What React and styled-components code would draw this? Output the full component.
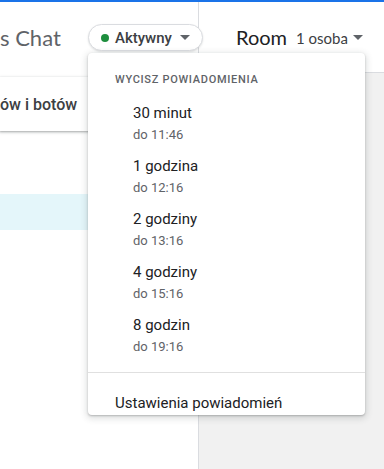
import React from "react";
import styled, { createGlobalStyle } from "styled-components";

const GlobalStyle = createGlobalStyle`
  html, body {
    margin: 0;
    padding: 0;
    background: #fff;
  }
  body {
    font-family: Roboto, "Liberation Sans", sans-serif;
  }
  * {
    box-sizing: border-box;
  }
`;

const muteOptions = [
  { label: "30 minut", until: "do 11:46" },
  { label: "1 godzina", until: "do 12:16" },
  { label: "2 godziny", until: "do 13:16" },
  { label: "4 godziny", until: "do 15:16" },
  { label: "8 godzin", until: "do 19:16" },
];

function Caret({ color = "#5f6368" }) {
  return (
    <svg width="10" height="5" viewBox="0 0 10 5">
      <path d="M0 0 L10 0 L5 5 Z" fill={color} />
    </svg>
  );
}

function MuteMenu() {
  return (
    <Menu>
      <MenuHeading>Wycisz powiadomienia</MenuHeading>
      <MenuList>
        {muteOptions.map((opt) => (
          <MenuItem key={opt.label}>
            <ItemLabel>{opt.label}</ItemLabel>
            <ItemSub>{opt.until}</ItemSub>
          </MenuItem>
        ))}
      </MenuList>
      <MenuDivider />
      <SettingsItem>Ustawienia powiadomień</SettingsItem>
    </Menu>
  );
}

export default function App() {
  return (
    <>
      <GlobalStyle />
      <Page>
        <LeftPane>
          <LeftHeader>
            <Title>s Chat</Title>
            <StatusAnchor>
              <StatusPill>
                <Dot />
                <StatusText>Aktywny</StatusText>
                <Caret />
              </StatusPill>
              <MuteMenu />
            </StatusAnchor>
          </LeftHeader>
          <SearchCard>
            <SearchText>ów i botów</SearchText>
          </SearchCard>
          <ChatList>
            <ChatRow />
            <ChatRow selected />
            <ChatRow />
          </ChatList>
        </LeftPane>
        <RightPane>
          <RoomHeader>
            <RoomName>Room</RoomName>
            <Members>
              1 osoba
              <Caret />
            </Members>
          </RoomHeader>
          <RoomBody />
        </RightPane>
      </Page>
    </>
  );
}

const Page = styled.div`
  width: 384px;
  height: 469px;
  overflow: hidden;
  border-top: 2px solid #1a73e8;
  display: grid;
  grid-template-columns: 199px 1fr;
`;

const LeftPane = styled.div`
  background: #fff;
  border-right: 1px solid #dadce0;
  display: flex;
  flex-direction: column;
  min-width: 0;
`;

const LeftHeader = styled.div`
  height: 71px;
  display: flex;
  align-items: center;
  gap: 27px;
  position: relative;
  z-index: 5;
`;

const Title = styled.div`
  font-family: Lato, "Open Sans", sans-serif;
  font-size: 22px;
  color: #5f6368;
  white-space: nowrap;
  flex-shrink: 0;
  width: 61px;
`;

const StatusAnchor = styled.div`
  position: relative;
  flex-shrink: 0;
`;

const StatusPill = styled.div`
  height: 27px;
  display: inline-flex;
  align-items: center;
  gap: 6px;
  padding: 0 12px 0 12px;
  border: 1px solid #dadce0;
  border-radius: 14px;
  background: #fff;
  box-shadow: 0 1px 2px rgba(60, 64, 67, 0.15);
  svg {
    margin-left: 2px;
  }
`;

const Dot = styled.span`
  width: 8px;
  height: 8px;
  border-radius: 50%;
  background: #1e8e3e;
`;

const StatusText = styled.span`
  font-size: 15px;
  font-weight: 500;
  color: #3c4043;
`;

const Menu = styled.div`
  position: absolute;
  top: calc(100% + 2px);
  left: 0;
  width: 277px;
  height: 362px;
  overflow: hidden;
  background: #fff;
  border-radius: 4px;
  box-shadow: 0 1px 2px 0 rgba(60, 64, 67, 0.3),
    0 2px 6px 2px rgba(60, 64, 67, 0.15);
`;

const MenuHeading = styled.div`
  padding: 19px 24px 8px 27px;
  font-size: 11px;
  line-height: 16px;
  font-weight: 500;
  letter-spacing: 0.7px;
  text-transform: uppercase;
  color: #5f6368;
`;

const MenuList = styled.div`
  display: flex;
  flex-direction: column;
`;

const MenuItem = styled.div`
  padding: 6px 16px 5px 45px;
  display: flex;
  flex-direction: column;
`;

const ItemLabel = styled.div`
  font-size: 15px;
  line-height: 22px;
  color: #202124;
`;

const ItemSub = styled.div`
  margin-top: 2px;
  font-size: 13px;
  line-height: 18px;
  color: #5f6368;
`;

const MenuDivider = styled.div`
  margin-top: 11px;
  height: 1px;
  background: #e0e0e0;
`;

const SettingsItem = styled.div`
  padding: 19px 16px 0 27px;
  font-size: 15px;
  line-height: 22px;
  color: #202124;
  white-space: nowrap;
`;

const SearchCard = styled.div`
  margin: 4px 8px 0 0;
  height: 54px;
  display: flex;
  align-items: center;
  background: #fff;
  border-radius: 0 8px 8px 0;
  box-shadow: 0 1px 2px 0 rgba(60, 64, 67, 0.3),
    0 1px 3px 1px rgba(60, 64, 67, 0.15);
`;

const SearchText = styled.span`
  font-size: 16px;
  font-weight: 500;
  color: #3c4043;
  white-space: nowrap;
`;

const ChatList = styled.div`
  margin-top: 27px;
  display: flex;
  flex-direction: column;
`;

const ChatRow = styled.div`
  height: 36px;
  background: ${(p) => (p.selected ? "#e4f6fa" : "transparent")};
`;

const RightPane = styled.div`
  display: flex;
  flex-direction: column;
  min-width: 0;
`;

const RoomHeader = styled.div`
  height: 71px;
  flex-shrink: 0;
  display: flex;
  align-items: center;
  gap: 9px;
  padding-left: 37px;
  background: #fff;
  border-bottom: 1px solid #dadce0;
`;

const RoomName = styled.div`
  font-family: Lato, "Open Sans", sans-serif;
  font-size: 20px;
  color: #202124;
`;

const Members = styled.div`
  display: flex;
  align-items: center;
  gap: 5px;
  font-family: Lato, "Open Sans", sans-serif;
  font-size: 15px;
  color: #3c4043;
  padding-top: 1px;
`;

const RoomBody = styled.div`
  flex: 1;
  background: #f1f1f1;
`;
